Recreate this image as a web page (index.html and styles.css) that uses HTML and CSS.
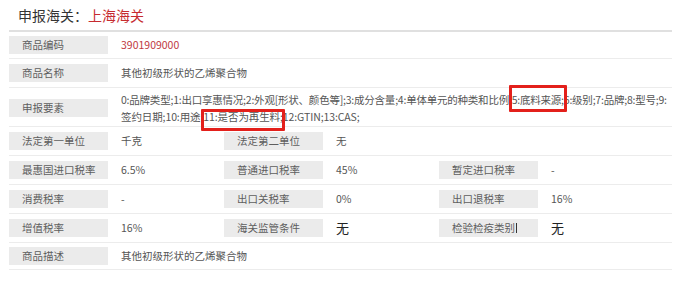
FILE: index.html
```html
<!DOCTYPE html>
<html lang="zh-CN">
<head>
<meta charset="utf-8">
<title>申报海关</title>
<link rel="stylesheet" href="styles.css">
</head>
<body>
<div class="page">
  <h1 class="title">申报海关：<span class="title-red">上海海关</span></h1>
  <div class="table">
    <div class="row">
      <div class="lbl">商品编码</div>
      <div class="val wide code">3901909000</div>
    </div>
    <div class="row">
      <div class="lbl">商品名称</div>
      <div class="val wide">其他初级形状的乙烯聚合物</div>
    </div>
    <div class="row row-tall">
      <div class="lbl">申报要素</div>
      <div class="val wide multi"><span class="line line-dense">0:品牌类型;1:出口享惠情况;2:外观[形状、颜色等];3:成分含量;4:单体单元的种类和比例;5:底料来源;6:级别;7:品牌;8:型号;9:</span><span class="line line-tight">签约日期;10:用途;11:是否为再生料;12:GTIN;13:CAS;</span></div>
    </div>
    <div class="row">
      <div class="lbl">法定第一单位</div>
      <div class="val">千克</div>
      <div class="lbl">法定第二单位</div>
      <div class="val">无</div>
    </div>
    <div class="row">
      <div class="lbl">最惠国进口税率</div>
      <div class="val">6.5%</div>
      <div class="lbl">普通进口税率</div>
      <div class="val">45%</div>
      <div class="lbl">暂定进口税率</div>
      <div class="val">-</div>
    </div>
    <div class="row">
      <div class="lbl">消费税率</div>
      <div class="val">-</div>
      <div class="lbl">出口关税率</div>
      <div class="val">0%</div>
      <div class="lbl">出口退税率</div>
      <div class="val">16%</div>
    </div>
    <div class="row">
      <div class="lbl">增值税率</div>
      <div class="val">16%</div>
      <div class="lbl">海关监管条件</div>
      <div class="val big">无</div>
      <div class="lbl">检验检疫类别<span class="caret"></span></div>
      <div class="val big">无</div>
    </div>
    <div class="row">
      <div class="lbl">商品描述</div>
      <div class="val wide">其他初级形状的乙烯聚合物</div>
    </div>
  </div>
  <span class="mark mark-1"></span>
  <span class="mark mark-2"></span>
</div>
</body>
</html>
```

FILE: styles.css
```css
* { box-sizing: border-box; }

html, body {
  margin: 0;
  padding: 0;
  background: #ffffff;
}

body {
  font-family: "Noto Sans CJK SC", "Microsoft YaHei", sans-serif;
  color: #555;
}

.page {
  position: relative;
  width: 686px;
  height: 281px;
  padding-left: 9px;
}

.title {
  margin: 0;
  width: 663px;
  height: 32px;
  padding-left: 9px;
  font-size: 14px;
  font-weight: normal;
  line-height: 30px;
  color: #333;
  border-bottom: 2px solid #e0e0e0;
}

.title-red {
  color: #c62b2f;
}

.table {
  width: 663px;
}

.row {
  display: grid;
  grid-template-columns: 99px 116px 99px 116px 99px 1fr;
  align-items: center;
  padding: 5px 0;
  border-bottom: 1px solid #ececec;
  font-size: 10.5px;
}

.row:first-child,
.row:last-child {
  padding: 4px 0;
}

.row-tall {
  padding: 3px 0 1px;
}

.lbl {
  position: relative;
  height: 18px;
  line-height: 18px;
  padding-left: 13px;
  background: #ebebeb;
  color: #5e5e5e;
  white-space: nowrap;
}

.val {
  padding-left: 13px;
  line-height: 18px;
  color: #555;
  white-space: nowrap;
}

.wide {
  grid-column: 2 / -1;
}

.multi {
  line-height: 17px;
}

.line {
  display: block;
}

.line-dense {
  letter-spacing: -0.22px;
}

.line-tight {
  letter-spacing: -0.1px;
}

.code {
  color: #c0393f;
}

.big {
  font-size: 13px;
  color: #222;
}

.caret {
  display: inline-block;
  width: 1px;
  height: 10px;
  margin-left: 1px;
  vertical-align: -1px;
  background: #333;
}

.mark {
  position: absolute;
  border: 3px solid #e3201b;
  border-radius: 1px;
}

.mark-1 {
  left: 509px;
  top: 85px;
  width: 58px;
  height: 27px;
}

.mark-2 {
  left: 201px;
  top: 109px;
  width: 84px;
  height: 22px;
}
```
